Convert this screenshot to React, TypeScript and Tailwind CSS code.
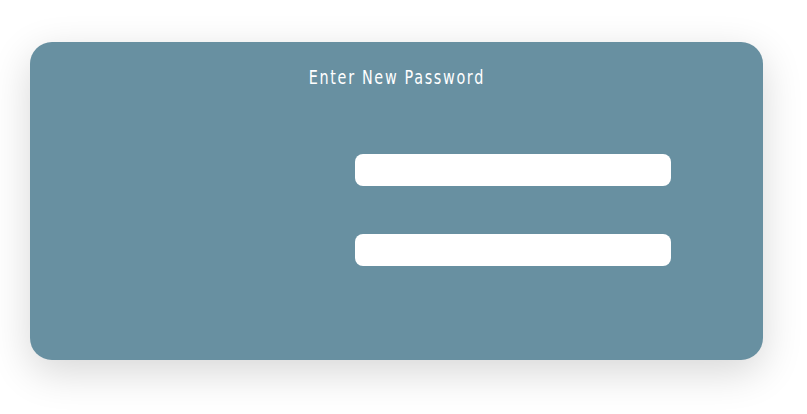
export default function App() {
  return (
    <div className="w-[807px] h-[414px] bg-white pt-[42px] pl-[30px]">
      <div className="w-[733px] h-[318px] rounded-[22px] bg-[#6890a1] shadow-[0_12px_40px_rgba(0,0,0,0.16)] flex flex-col">
        {/* Title */}
        <div className="pt-[23px] flex justify-center">
          <h2
            className="inline-block scale-x-[0.84] text-white text-[19px] leading-[24px] tracking-[2px]"
            style={{ fontFamily: '"DejaVu Sans Condensed", "DejaVu Sans", sans-serif' }}
          >
            Enter New Password
          </h2>
        </div>

        {/* Fields */}
        <div className="flex flex-col gap-[48px] pl-[325px] pt-[65px]">
          <input
            type="password"
            aria-label="New password"
            className="w-[316px] h-[32px] rounded-[8px] bg-white outline-none px-3"
          />
          <input
            type="password"
            aria-label="Confirm password"
            className="w-[316px] h-[32px] rounded-[8px] bg-white outline-none px-3"
          />
        </div>
      </div>
    </div>
  );
}
